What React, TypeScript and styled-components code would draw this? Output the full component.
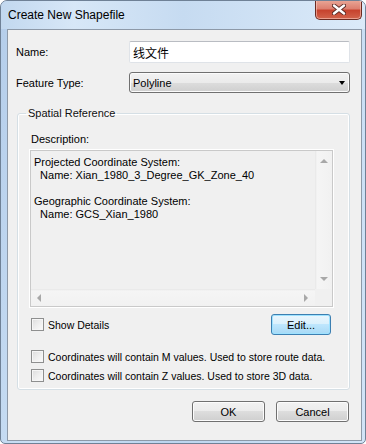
import React from "react";
import styled, { createGlobalStyle } from "styled-components";

const GlobalStyle = createGlobalStyle`
  html, body {
    margin: 0;
    padding: 0;
    background: #ffffff;
  }
  body {
    font-family: "Liberation Sans", Arial, sans-serif;
    font-size: 11px;
    color: #000;
  }
  * {
    box-sizing: border-box;
  }
`;

const Window = styled.div`
  width: 366px;
  height: 444px;
  display: flex;
  flex-direction: column;
  border: 1px solid #6f8196;
  border-radius: 7px 7px 5px 5px;
  background: linear-gradient(100deg, #b4cdea 0%, #cbe0f5 25%, #bcd5ef 55%, #d2e4f7 100%);
  overflow: hidden;
`;

const TitleBar = styled.div`
  height: 28px;
  display: flex;
  align-items: center;
  padding-left: 7px;
  background: linear-gradient(90deg, #c2d8ef 0%, #d7e7f7 20%, #c6dbf1 50%, #dbeaf9 100%);
`;

const TitleText = styled.span`
  font-size: 12px;
  color: #000;
  flex: 1;
`;

const CloseButton = styled.div`
  align-self: flex-start;
  width: 47px;
  height: 20px;
  margin: -1px 3px 0 0;
  display: flex;
  align-items: center;
  justify-content: center;
  border: 1px solid #6b2b22;
  border-top: none;
  border-radius: 0 0 5px 5px;
  background: linear-gradient(180deg, #eaa898 0%, #dc8070 45%, #c7432e 55%, #d2644c 100%);
  box-shadow: inset 0 0 0 1px rgba(255, 210, 200, 0.55);
`;

const Client = styled.div`
  flex: 1;
  margin: 0 3px 2px 6px;
  background: #f0f0f0;
  border: 1px solid #8d99a8;
  display: flex;
  flex-direction: column;
  padding: 11px 11px 0 8px;
`;

const FormGrid = styled.div`
  display: grid;
  grid-template-columns: 113px 221px;
  row-gap: 9px;
  align-items: center;
`;

const FieldLabel = styled.label`
  font-size: 11px;
`;

const TextInput = styled.div`
  height: 22px;
  display: flex;
  align-items: center;
  padding-left: 3px;
  background: #ffffff;
  border: 1px solid #dfe3e8;
  border-top-color: #b9bcc2;
  border-radius: 2px;
  font-family: "Liberation Sans", "Noto Sans CJK SC", sans-serif;
  font-size: 12px;
`;

const Select = styled.div`
  height: 21px;
  display: flex;
  align-items: center;
  justify-content: space-between;
  padding: 0 4px 0 3px;
  border: 1px solid #707070;
  border-radius: 3px;
  background: linear-gradient(180deg, #f2f2f2 0%, #ebebeb 50%, #dddddd 50%, #cfcfcf 100%);
  box-shadow: inset 0 0 0 1px #fbfbfb;
`;

const GroupBox = styled.fieldset`
  min-width: 0;
  margin: 14px 0 0 1px;
  padding: 0;
  border: 1px solid #d5dfe5;
  border-radius: 3px;
  box-shadow: inset 0 0 0 1px #ffffff;
`;

const Legend = styled.legend`
  margin-left: 8px;
  padding: 0 2px;
  line-height: 13px;
  font-size: 11px;
  color: #111;
`;

const GroupBody = styled.div`
  display: flex;
  flex-direction: column;
  padding: 13px 16px 4px 12px;
`;

const SmallLabel = styled.div`
  line-height: 13px;
  margin: 0 0 4px 1px;
`;

const DescBox = styled.div`
  height: 157px;
  display: grid;
  grid-template-columns: minmax(0, 1fr) 17px;
  grid-template-rows: 1fr 17px;
  border: 1px solid #c9c9c9;
  box-shadow: 0 0 0 1px #ffffff;
  background: #f0f0f0;
`;

const DescText = styled.div`
  padding: 5px 3px;
  line-height: 13px;
  white-space: pre;
  overflow: hidden;
`;

const ScrollTrack = styled.div<{ $vertical?: boolean }>`
  display: flex;
  flex-direction: ${({ $vertical }) => ($vertical ? "column" : "row")};
  justify-content: space-between;
  align-items: center;
  background: ${({ $vertical }) =>
    $vertical
      ? "linear-gradient(90deg, #e6e6e6 0px, #f5f5f5 2px, #f1f1f1 100%)"
      : "linear-gradient(180deg, #e6e6e6 0px, #f5f5f5 2px, #f1f1f1 100%)"};
  padding: ${({ $vertical }) => ($vertical ? "8px 0 8px" : "0 7px 0 6px")};
`;

const Corner = styled.div`
  background: #f0f0f0;
`;

const Arrow = styled.span<{ $dir: "up" | "down" | "left" | "right" }>`
  width: 0;
  height: 0;
  border-style: solid;
  ${({ $dir }) =>
    $dir === "up"
      ? "border-width: 0 4px 4px 4px; border-color: transparent transparent #a8a8a8 transparent;"
      : $dir === "down"
      ? "border-width: 4px 4px 0 4px; border-color: #a8a8a8 transparent transparent transparent;"
      : $dir === "left"
      ? "border-width: 4px 4px 4px 0; border-color: transparent #a8a8a8 transparent transparent;"
      : "border-width: 4px 0 4px 4px; border-color: transparent transparent transparent #a8a8a8;"}
`;

const DropArrow = styled.span`
  width: 0;
  height: 0;
  border-style: solid;
  border-width: 4px 3.5px 0 3.5px;
  border-color: #000 transparent transparent transparent;
  margin-top: 1px;
`;

const DetailsRow = styled.div`
  display: flex;
  align-items: center;
  justify-content: space-between;
  margin: 7px 2px 0 1px;
`;

const CheckRow = styled.label<{ $height?: number }>`
  display: flex;
  align-items: center;
  gap: 4px;
  height: ${({ $height }) => $height ?? 19}px;
  font-size: 10.5px;
  white-space: nowrap;
`;

const CheckBox = styled.span`
  width: 13px;
  height: 13px;
  flex: none;
  border: 1px solid #8e8f8f;
  background: linear-gradient(135deg, #dcdcdc 0%, #eeeeee 50%, #fbfbfb 100%);
  box-shadow: inset 0 0 0 1px #f6f6f6;
`;

const CheckList = styled.div`
  display: flex;
  flex-direction: column;
  margin: 12px 0 0 1px;
`;

const Button = styled.button<{ $hot?: boolean; $w: number }>`
  width: ${({ $w }) => $w}px;
  height: 21px;
  padding: 0;
  font-family: "Liberation Sans", Arial, sans-serif;
  font-size: 11px;
  color: #000;
  border-radius: 3px;
  border: 1px solid ${({ $hot }) => ($hot ? "#3c7fb1" : "#707070")};
  background: ${({ $hot }) =>
    $hot
      ? "linear-gradient(180deg, #eaf6fd 0%, #d9f0fc 50%, #bee6fd 50%, #a7d9f5 100%)"
      : "linear-gradient(180deg, #f2f2f2 0%, #ebebeb 50%, #dddddd 50%, #cfcfcf 100%)"};
  box-shadow: inset 0 0 0 1px ${({ $hot }) => ($hot ? "#9ee2ff" : "#fcfcfc")};
`;

const Footer = styled.div`
  display: flex;
  justify-content: flex-end;
  gap: 11px;
  margin: 11px 1px 0 0;
`;

const CloseGlyph = () => (
  <svg width="14" height="11" viewBox="0 0 14 11">
    <path d="M2 1.5 L12 9.5 M12 1.5 L2 9.5" stroke="#5b2a24" strokeWidth="4.2" strokeLinecap="round" />
    <path d="M2 1.5 L12 9.5 M12 1.5 L2 9.5" stroke="#ffffff" strokeWidth="2.4" strokeLinecap="round" />
  </svg>
);

const description = `Projected Coordinate System:
  Name: Xian_1980_3_Degree_GK_Zone_40

Geographic Coordinate System:
  Name: GCS_Xian_1980`;

export default function App() {
  return (
    <>
      <GlobalStyle />
      <Window>
        <TitleBar>
          <TitleText>Create New Shapefile</TitleText>
          <CloseButton>
            <CloseGlyph />
          </CloseButton>
        </TitleBar>
        <Client>
          <FormGrid>
            <FieldLabel>Name:</FieldLabel>
            <TextInput>线文件</TextInput>
            <FieldLabel>Feature Type:</FieldLabel>
            <Select>
              <span>Polyline</span>
              <DropArrow />
            </Select>
          </FormGrid>

          <GroupBox>
            <Legend>Spatial Reference</Legend>
            <GroupBody>
              <SmallLabel>Description:</SmallLabel>
              <DescBox>
                <DescText>{description}</DescText>
                <ScrollTrack $vertical>
                  <Arrow $dir="up" />
                  <Arrow $dir="down" />
                </ScrollTrack>
                <ScrollTrack>
                  <Arrow $dir="left" />
                  <Arrow $dir="right" />
                </ScrollTrack>
                <Corner />
              </DescBox>

              <DetailsRow>
                <CheckRow $height={21}>
                  <CheckBox />
                  Show Details
                </CheckRow>
                <Button $hot $w={60}>Edit...</Button>
              </DetailsRow>

              <CheckList>
                <CheckRow>
                  <CheckBox />
                  Coordinates will contain M values. Used to store route data.
                </CheckRow>
                <CheckRow>
                  <CheckBox />
                  Coordinates will contain Z values. Used to store 3D data.
                </CheckRow>
              </CheckList>
            </GroupBody>
          </GroupBox>

          <Footer>
            <Button $w={73}>OK</Button>
            <Button $w={73}>Cancel</Button>
          </Footer>
        </Client>
      </Window>
    </>
  );
}
